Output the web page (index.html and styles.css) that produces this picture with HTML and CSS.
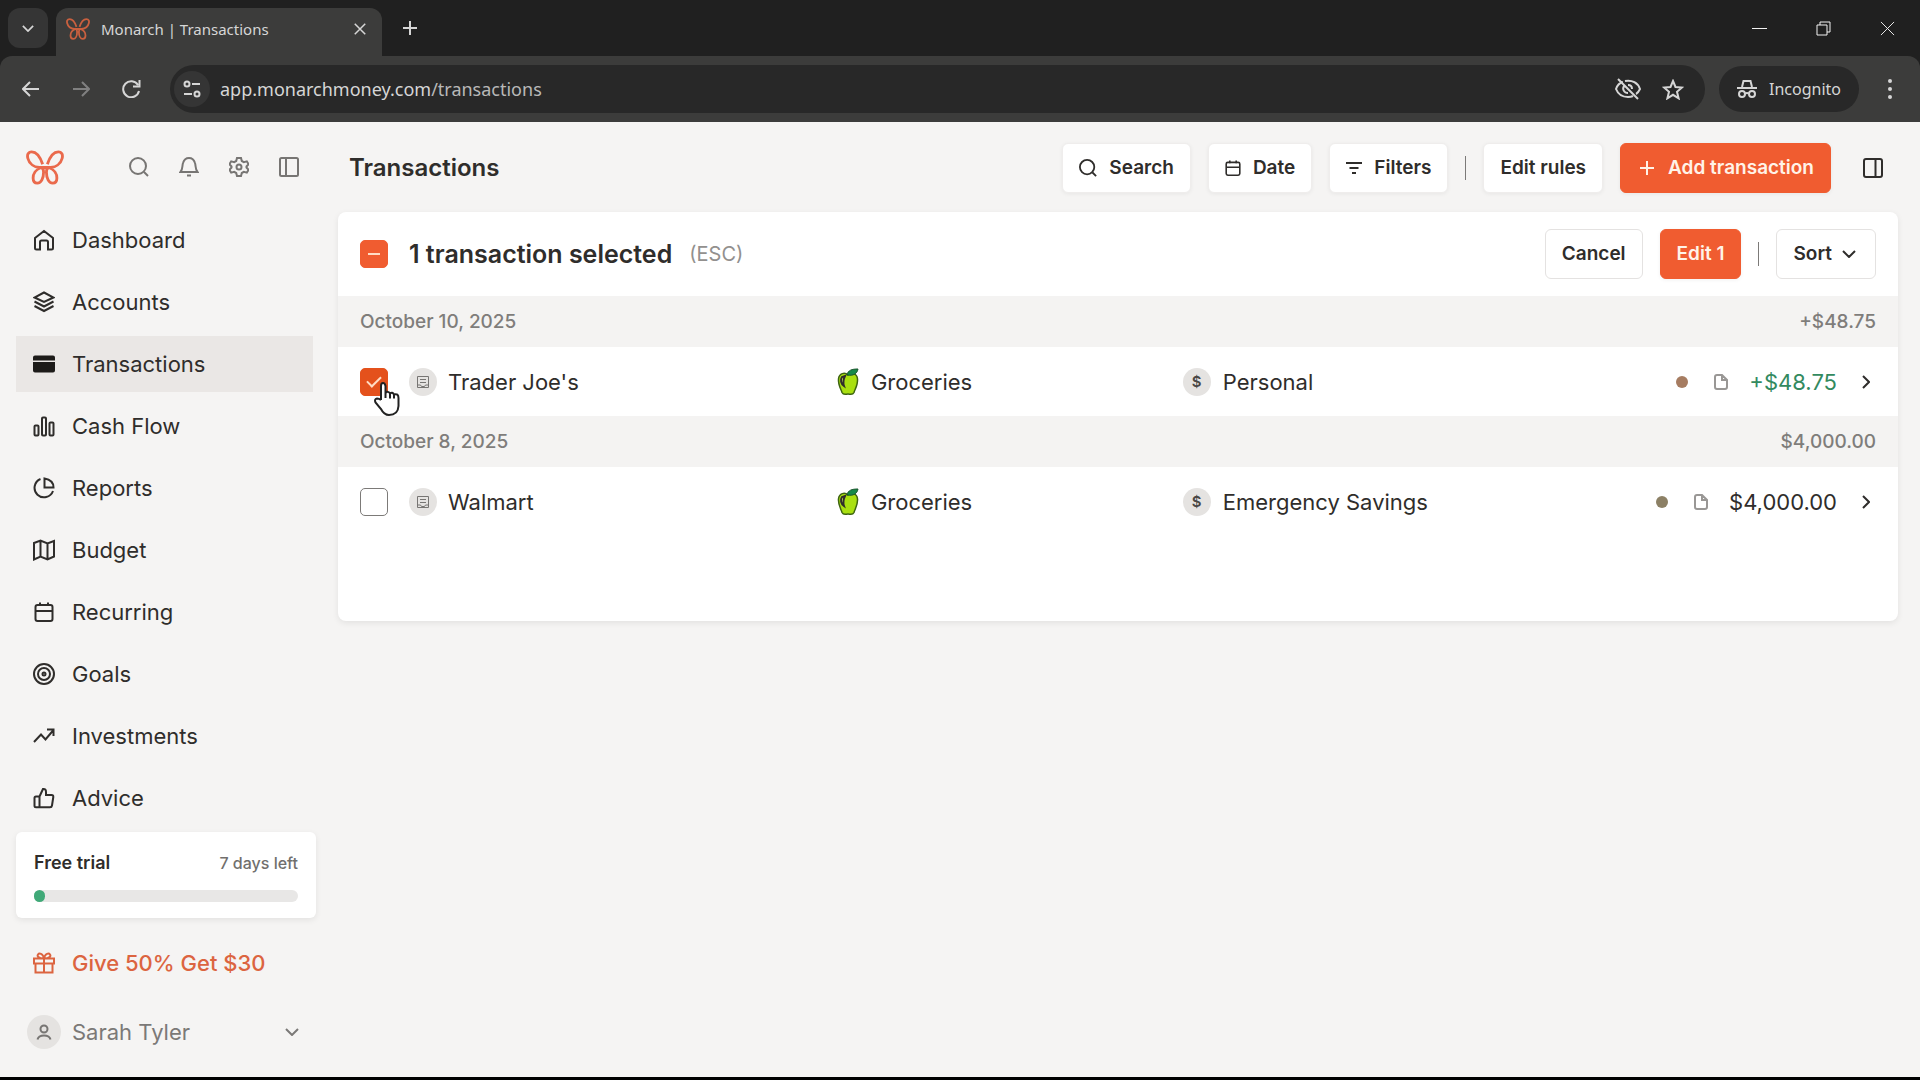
FILE: index.html
```html
<!DOCTYPE html>
<html lang="en">
<head>
<meta charset="utf-8">
<meta name="viewport" content="width=device-width, initial-scale=1">
<title>Monarch | Transactions</title>
<link rel="stylesheet" href="styles.css">
</head>
<body>
<svg class="defs" aria-hidden="true">
  <symbol id="butterfly" viewBox="0 0 40 36"><path d="M17.500 14.500C15 7 11 1.500 6 1.500C2 1.500 1 5 2 8.500C3.500 14.500 9 17.500 14 18H26C31 17.500 36.500 14.500 38 8.500C39 5 38 1.500 34 1.500C29 1.500 25 7 22.500 14.500M16 18C10 20 7.500 25 7.500 29C7.500 33 9.500 34.500 12 34.500C16 34.500 18.500 29 18.500 23C18.500 20 18 18.500 16 18M24 18C30 20 32.500 25 32.500 29C32.500 33 30.500 34.500 28 34.500C24 34.500 21.500 29 21.500 23C21.500 20 22 18.500 24 18"/></symbol>
  <symbol id="search" viewBox="0 0 20 20"><circle cx="9" cy="9" r="8"/><path d="M15 15l4 4"/></symbol>
  <symbol id="calendar" viewBox="0 0 20 20"><rect x="1.500" y="3" width="17" height="16" rx="2"/><path d="M1.500 9h17M6 .5V4M14 .5V4"/></symbol>
  <symbol id="store" viewBox="0 0 14 14"><path d="M1.500 1.500h11v11h-11zM4 4.500h6M4 7.500h6M1.500 10h3l1 1.500h3l1-1.500h3"/></symbol>
  <symbol id="apple" viewBox="0 0 26 28"><path d="M13 7C10 4 4 5 3.500 11C3 17 6 21 7 24.500C8.500 27.500 11 26 13 26C15 26 17.500 27.500 19 24.500C20 21 23 17 22.500 11C22 5 16 4 13 7Z" fill="#a9e010" stroke="#3d6410" stroke-width="1.500"/><path d="M7 9C5 12 6 16 9 18C8 15 8 12 10 8Z" fill="#dcf76c"/><path d="M12 7C13 2 17 1 23 1C22 6 18 8 13 7Z" fill="#168a49" stroke="#19552b" stroke-width="1"/></symbol>
  <symbol id="file" viewBox="0 0 14 16"><path d="M3 1h5l5 5v7q0 2-2 2H3q-2 0-2-2V3q0-2 2-2zM8 1v5h5"/></symbol>
  <symbol id="right" viewBox="0 0 8 14"><path d="M1 1l6 6-6 6"/></symbol>
  <symbol id="down" viewBox="0 0 14 8"><path d="M1 1l6 6 6-6"/></symbol>
  <symbol id="close" viewBox="0 0 16 16"><path d="M1 1l14 14M15 1L1 15"/></symbol>
</svg>

<header class="browser">
  <div class="tab-strip">
    <button class="tab-search" aria-label="Search tabs"><svg width="12" height="7"><use href="#down"/></svg></button>
    <div class="tab">
      <svg class="favicon" width="24" height="24"><use href="#butterfly"/></svg>
      <span class="tab-title">Monarch | Transactions</span>
      <button class="plain" aria-label="Close tab"><svg width="12" height="12"><use href="#close"/></svg></button>
    </div>
    <button class="plain new-tab" aria-label="New tab"><svg width="16" height="16" viewBox="0 0 16 16"><path d="M8 1v14M1 8h14"/></svg></button>
    <div class="window-controls">
      <button class="plain" aria-label="Minimize"><svg width="15" height="15" viewBox="0 0 15 15"><path d="M0 7.500h15"/></svg></button>
      <button class="plain" aria-label="Restore"><svg width="15" height="15" viewBox="0 0 15 15"><path d="M1 4h10v10H1zM4 4V1h10v10h-3"/></svg></button>
      <button class="plain" aria-label="Close window"><svg width="15" height="15"><use href="#close"/></svg></button>
    </div>
  </div>
  <div class="toolbar">
    <button class="plain" aria-label="Back"><svg width="18" height="16" viewBox="0 0 18 16"><path d="M8 1L1 8l7 7M1 8h16"/></svg></button>
    <button class="plain dim" aria-label="Forward"><svg width="18" height="16" viewBox="0 0 18 16"><path d="M10 1l7 7-7 7M17 8H1"/></svg></button>
    <button class="plain" aria-label="Reload"><svg width="19" height="18" viewBox="0 0 19 18"><path d="M16 5A8 8 0 1 0 17 11M17.500 0v6.500H11"/></svg></button>
    <div class="address">
      <button class="plain site-info" aria-label="Site information"><svg width="18" height="18" viewBox="0 0 18 18"><circle cx="4" cy="4" r="2.500"/><circle cx="14" cy="14" r="2.500"/><path d="M9 4h8M1 14h8"/></svg></button>
      <a class="url" href="#">app.monarchmoney.com<span>/transactions</span></a>
      <button class="plain" aria-label="Third-party cookies blocked"><svg width="26" height="22" viewBox="0 0 26 22"><path d="M8 4C4 5 2 8 1 11C3 16 7 19 13 19C15 19 17 18.500 18 18M10 3C17 1.500 23 5 25 11C24 13 23 15 21 16M9 8C7 11 9 15 13 15M13 7Q17 7 17 11M3 1l20 20"/></svg></button>
      <button class="plain" aria-label="Bookmark"><svg width="22" height="21" viewBox="0 0 22 21"><path d="M11 2l2.500 6 6.500.5-5 4.300 1.600 6.500L11 15.800 5.400 19.300 7 12.800 2 8.500 8.500 8z"/></svg></button>
    </div>
    <button class="incognito"><svg width="20" height="20" viewBox="0 0 20 20"><path d="M5 8L6.500 2h7L15 8"/><path d="M0 9h20"/><circle cx="5" cy="15" r="3"/><circle cx="15" cy="15" r="3"/><path d="M8 14.500q2-1 4 0"/></svg>Incognito</button>
    <button class="plain dots" aria-label="Menu"><svg width="4" height="20" viewBox="0 0 4 20"><circle cx="2" cy="2" r="2"/><circle cx="2" cy="10" r="2"/><circle cx="2" cy="18" r="2"/></svg></button>
  </div>
</header>

<div class="app">
  <aside class="sidebar">
    <div class="side-top">
      <a class="logo" href="#" aria-label="Monarch"><svg width="38" height="35"><use href="#butterfly"/></svg></a>
      <div class="side-tools">
        <button class="plain" aria-label="Search"><svg width="20" height="20"><use href="#search"/></svg></button>
        <button class="plain" aria-label="Notifications"><svg width="20" height="20" viewBox="0 0 20 20"><path d="M1.500 15C4 12 3 9 4 6Q5.500 1 10 1T16 6C17 9 16 12 18.500 15zM8 18.500h4"/></svg></button>
        <button class="plain" aria-label="Settings"><svg width="20" height="20" viewBox="0 0 20 20"><path d="M8 1h4l.8 3 2 1.100 3-.8 1.800 3L17.500 9.500v1l2.100 2.200-1.800 3-3-.8-2 1.100-.8 3H8l-.8-3-2-1.100-3 .8-1.800-3 2.100-2.200v-1L.4 7.300l1.800-3 3 .8 2-1.100z"/><circle cx="10" cy="10" r="2.500"/></svg></button>
        <button class="plain" aria-label="Toggle sidebar"><svg width="20" height="20" viewBox="0 0 20 20"><rect x="1" y="1" width="18" height="18" rx="1.500"/><path d="M7 1v18"/></svg></button>
      </div>
    </div>
    <nav class="nav">
      <a href="#"><svg width="22" height="22" viewBox="0 0 22 22"><path d="M2 9l9-7 9 7v10q0 1.500-1.500 1.500H15V13q0-1.500-1.500-1.500h-5Q7 11.500 7 13v7.500H3.500Q2 20.500 2 19z"/></svg>Dashboard</a>
      <a href="#"><svg width="22" height="22" viewBox="0 0 22 22"><path d="M11 1.500l9.500 5L11 11 1.500 6.500zM1.500 10.500L11 15.500l9.500-5M1.500 15L11 20l9.500-5"/></svg>Accounts</a>
      <a class="current" href="#" aria-current="page"><svg width="22" height="22" viewBox="0 0 22 22"><path class="solid" d="M2 2.500h18q2 0 2 2V7.500H0V4.500q0-2 2-2zM0 9h22v8.500q0 2-2 2H2q-2 0-2-2z"/></svg>Transactions</a>
      <a href="#"><svg width="22" height="22" viewBox="0 0 22 22"><rect x="1.500" y="10.500" width="4" height="10" rx="1"/><rect x="9" y="2.500" width="4" height="18" rx="1"/><rect x="16.500" y="7.500" width="4" height="13" rx="1"/></svg>Cash Flow</a>
      <a href="#"><svg width="22" height="22" viewBox="0 0 22 22"><path d="M7.500 2A9.500 9.500 0 1 0 20 14M11.500 1.500V10.500H20.500Q20.500 3 11.500 1.500z"/></svg>Reports</a>
      <a href="#"><svg width="22" height="22" viewBox="0 0 22 22"><path d="M1 4l6.500-2.500 7 3L21 2v15.500l-6.500 3-7-3L1 20.500zM7.500 1.500v16M14.500 4.500v16"/></svg>Budget</a>
      <a href="#"><svg width="20" height="20"><use href="#calendar"/></svg>Recurring</a>
      <a href="#"><svg width="22" height="22" viewBox="0 0 22 22"><circle cx="11" cy="11" r="10"/><circle cx="11" cy="11" r="6"/><circle cx="11" cy="11" r="1.500"/></svg>Goals</a>
      <a href="#"><svg width="22" height="22" viewBox="0 0 22 22"><path d="M1 17l7-7.500 4.500 5L20.500 5M14 4.500h6.500V11"/></svg>Investments</a>
      <a href="#"><svg width="22" height="22" viewBox="0 0 22 22"><path d="M6.500 9.500L10 2Q13 1.500 13 5V8h5.500q2 0 1.800 2L19 18.500q-.3 1.800-2 1.800H6.500zH3q-1.500 0-1.500 1.500v7.800q0 1.500 1.500 1.500h3.500"/></svg>Advice</a>
    </nav>
    <section class="trial">
      <div class="trial-head"><label for="trial">Free trial</label><span>7 days left</span></div>
      <progress id="trial" max="24" value="1"></progress>
    </section>
    <a class="referral" href="#"><svg width="22" height="22" viewBox="0 0 22 22"><path d="M1 6.500h20v5H1zM2.500 11.500h17v9h-17zM11 6.500v14M11 6.500C5 6.500 4 4 5 2.500S10 1 11 6.500C12 1 16 1 17 2.500S17 6.500 11 6.500"/></svg>Give 50% Get $30</a>
    <button class="profile">
      <span class="avatar"><svg width="16" height="16" viewBox="0 0 16 16"><circle cx="8" cy="5" r="3.500"/><path d="M1.500 15.500q1-4 6.500-4t6.500 4"/></svg></span>
      <span class="profile-name">Sarah Tyler</span>
      <svg width="14" height="8"><use href="#down"/></svg>
    </button>
  </aside>

  <main class="main">
    <div class="page-head">
      <h1>Transactions</h1>
      <button class="btn"><svg width="18" height="18"><use href="#search"/></svg>Search</button>
      <button class="btn"><svg width="16" height="16"><use href="#calendar"/></svg>Date</button>
      <button class="btn"><svg width="16" height="16" viewBox="0 0 16 16"><path d="M0 3h16M3.500 8h9M6 13h4"/></svg>Filters</button>
      <span class="divider"></span>
      <button class="btn">Edit rules</button>
      <button class="btn primary add"><svg width="14" height="14" viewBox="0 0 14 14"><path d="M7 0v14M0 7h14"/></svg>Add transaction</button>
      <button class="plain panel" aria-label="Toggle summary"><svg width="20" height="20" viewBox="0 0 20 20"><rect x="1" y="1" width="18" height="18" rx="2"/><path d="M12.500 1v18"/></svg></button>
    </div>
    <section class="card">
      <div class="select-bar">
        <input class="check mixed" id="all" type="checkbox" checked>
        <label for="all">1 transaction selected</label>
        <span class="hint">(ESC)</span>
        <button class="btn flat">Cancel</button>
        <button class="btn primary">Edit 1</button>
        <span class="divider"></span>
        <button class="btn flat sort">Sort <svg width="14" height="8"><use href="#down"/></svg></button>
      </div>
      <table class="list">
        <colgroup><col class="c-check"><col class="c-name"><col class="c-cat"><col></colgroup>
        <tbody>
          <tr class="date"><th colspan="3" scope="rowgroup">October 10, 2025</th><td>+$48.75</td></tr>
          <tr class="item">
            <td class="pick"><input class="check hover" type="checkbox" checked aria-label="Select Trader Joe's"><svg class="pointer" width="27" height="34" viewBox="0 0 27 34"><path d="M8 18V4Q8 1 10 1T12.500 4V11Q15 8.500 17 11.500Q19.500 9.500 21 12.500Q25.500 11 25.500 16V24Q25 33 16 33Q11 33 8 27L2.500 20.500Q1 17 4 16.500Q6 16.500 8 18M12.500 11v5M17 11.500v5M21 12.500v4"/></svg></td>
            <td><div class="cell"><span class="disc"><svg width="14" height="14"><use href="#store"/></svg></span>Trader Joe's</div></td>
            <td><div class="cell category"><svg width="26" height="28"><use href="#apple"/></svg>Groceries</div></td>
            <td><div class="cell"><span class="disc coin">$</span><span class="account">Personal</span><span class="dot"></span><svg class="file" width="14" height="16"><use href="#file"/></svg><span class="amount credit">+$48.75</span><svg class="go" width="8" height="14"><use href="#right"/></svg></div></td>
          </tr>
        </tbody>
        <tbody>
          <tr class="date"><th colspan="3" scope="rowgroup">October 8, 2025</th><td>$4,000.00</td></tr>
          <tr class="item">
            <td class="pick"><input class="check" type="checkbox" aria-label="Select Walmart"></td>
            <td><div class="cell"><span class="disc"><svg width="14" height="14"><use href="#store"/></svg></span>Walmart</div></td>
            <td><div class="cell category"><svg width="26" height="28"><use href="#apple"/></svg>Groceries</div></td>
            <td><div class="cell"><span class="disc coin">$</span><span class="account">Emergency Savings</span><span class="dot olive"></span><svg class="file" width="14" height="16"><use href="#file"/></svg><span class="amount">$4,000.00</span><svg class="go" width="8" height="14"><use href="#right"/></svg></div></td>
          </tr>
        </tbody>
      </table>
    </section>
  </main>
</div>
</body>
</html>
```
FILE: styles.css
```css
* { box-sizing: border-box; }

body {
  margin: 0;
  min-height: 100vh;
  display: flex;
  flex-direction: column;
  background: #f5f4f3;
  border-bottom: 3px solid #000;
  color: #2f2d2b;
  font: 400 22px/28px Inter, "Liberation Sans", sans-serif;
}

a { color: inherit; text-decoration: none; }
button { font: inherit; color: inherit; margin: 0; cursor: pointer; }
svg { flex: none; display: block; fill: none; stroke: currentColor; stroke-width: 2; }
.defs { position: absolute; width: 0; height: 0; }

.plain {
  display: flex;
  align-items: center;
  justify-content: center;
  padding: 0;
  border: 0;
  background: none;
}

/* Browser window */
.browser {
  background: #202020;
  color: #d6d6d6;
  font-family: "Noto Sans", "Open Sans", sans-serif;
}
.tab-strip { display: flex; height: 56px; padding-left: 8px; }
.tab-search {
  display: flex;
  align-items: center;
  justify-content: center;
  width: 40px;
  height: 40px;
  margin: 8px 8px 0 0;
  padding: 0;
  border: 0;
  border-radius: 12px;
  background: #353535;
}
.tab {
  display: flex;
  align-items: center;
  width: 326px;
  margin-top: 8px;
  padding: 0 16px 6px 10px;
  border-radius: 12px 12px 0 0;
  background: #3c3c3b;
}
.favicon { color: #c9603f; stroke-width: 3; }
.tab-title { flex: 1; padding-left: 11px; font-size: 15px; line-height: 24px; }
.new-tab { width: 56px; }
.window-controls { display: flex; margin-left: auto; margin-right: 1px; color: #f2f2f2; }
.window-controls .plain { width: 64px; }
.window-controls svg { stroke-width: 1; }
.toolbar {
  display: flex;
  align-items: center;
  height: 66px;
  padding: 0 16px 0 6px;
  border-radius: 12px 12px 0 0;
  background: #3c3c3b;
}
.toolbar > .plain { width: 50px; height: 48px; }
.toolbar > .dim { color: #808080; }
.address {
  display: flex;
  flex: 1;
  align-items: center;
  height: 48px;
  margin: 0 14px;
  padding: 0 20px 0 4px;
  border-radius: 24px;
  background: #282828;
}
.address > .plain { width: 46px; }
.address > .plain:last-child { width: 44px; margin-right: -10px; }
.address > .site-info {
  width: 36px;
  height: 36px;
  border-radius: 18px;
  background: #353535;
}
.url { flex: 1; padding-left: 10px; font-size: 18px; line-height: 24px; }
.url span { color: #b8b8b8; }
.incognito {
  display: flex;
  align-items: center;
  gap: 12px;
  height: 46px;
  padding: 0 18px;
  border: 0;
  border-radius: 23px;
  background: #282828;
  font-size: 16px;
  line-height: 24px;
}
.toolbar > .dots { width: 30px; margin-left: 16px; margin-right: -1px; }
.dots svg { fill: currentColor; stroke: none; }

/* Application shell */
.app { display: flex; flex: 1; }
.sidebar {
  display: flex;
  flex-direction: column;
  flex: none;
  width: 338px;
  padding: 22px 22px 16px 16px;
}
.side-top {
  display: flex;
  align-items: center;
  justify-content: space-between;
  height: 46px;
  margin-bottom: 22px;
  padding: 0 17px 0 10px;
}
.logo { color: #ea6a4c; }
.logo svg { stroke-width: 3; }
.side-tools { display: flex; gap: 30px; color: #777573; }

.nav { display: flex; flex-direction: column; gap: 6px; }
.nav a, .referral {
  display: flex;
  align-items: center;
  gap: 17px;
  height: 56px;
  padding-left: 17px;
}
.nav svg, .referral svg { width: 22px; }
.nav .current { background: #eae7e5; margin-right: 3px; }
.solid { fill: #1d1b19; stroke: none; }
.trial {
  height: 86px;
  margin: 6px 0 17px;
  padding: 18px;
  border-radius: 6px;
  background: #fff;
  box-shadow: 0 2px 6px rgba(0, 0, 0, .08);
}
.trial-head { display: flex; justify-content: space-between; line-height: 26px; font-size: 18px; font-weight: 600; }
.trial-head span { color: #716f6d; font-size: 16px; font-weight: 500; }
progress {
  display: block;
  appearance: none;
  width: 100%;
  height: 12px;
  margin-top: 14px;
  border: 0;
}
progress::-webkit-progress-bar { border-radius: 6px; background: #e8e7e6; }
progress::-webkit-progress-value { border-radius: 6px; background: #40a978; }
.referral { color: #dc6440; font-weight: 500; }
.profile {
  display: flex;
  align-items: center;
  height: 36px;
  margin-top: 23px;
  padding: 0 17px 0 11px;
  border: 0;
  background: none;
  color: #7b7977;
}
.avatar, .disc {
  display: flex;
  align-items: center;
  justify-content: center;
  flex: none;
  border-radius: 50%;
  background: #e5e3e1;
  color: #777573;
}
.avatar { width: 34px; height: 34px; }
.profile-name { flex: 1; padding-left: 11px; text-align: left; }

.main { flex: 1; padding: 22px 22px 40px 0; min-width: 0; }
.page-head { display: flex; align-items: center; height: 48px; margin-bottom: 20px; gap: 17px; }
h1 { flex: 1; margin: 0; padding-left: 11px; font-size: 24px; font-weight: 600; line-height: 32px; }
.btn {
  display: flex;
  align-items: center;
  justify-content: center;
  gap: 12px;
  height: 50px;
  padding: 0 16px;
  border: 1px solid #efedec;
  border-radius: 6px;
  background: #fff;
  box-shadow: 0 1px 4px rgba(0, 0, 0, .06);
  font-size: 19px;
  font-weight: 600;
  line-height: 24px;
  white-space: nowrap;
}
.btn.flat { border-color: #e4e2e1; box-shadow: none; }
.btn.primary { border-color: #f05c30; background: #f05c30; color: #fff3e8; }
.btn.add { padding: 0 16px 0 19px; gap: 14px; }
.btn.sort { gap: 10px; padding-right: 19px; }
.divider { width: 1px; height: 24px; background: #7c7a78; }
.panel { width: 48px; height: 46px; margin: 0 1px 0 1px; }

.card {
  min-height: 409px;
  border-radius: 8px;
  background: #fff;
  box-shadow: 0 2px 6px rgba(0, 0, 0, .08);
}
.select-bar {
  display: flex;
  align-items: center;
  gap: 17px;
  height: 84px;
  padding: 0 22px;
}
.select-bar label { padding-left: 4px; font-size: 25px; font-weight: 600; }
.hint { flex: 1; color: #92908e; font-size: 20px; }

.check {
  appearance: none;
  display: flex;
  align-items: center;
  justify-content: center;
  flex: none;
  width: 28px;
  height: 28px;
  margin: 0;
  border: 1px solid #7c7a78;
  border-radius: 5px;
  background: #fff;
}
.check:checked { border-color: #f05c30; background: #f05c30; }
.check.hover:checked { border-color: #e4511c; background: #e4511c; }
.check:checked::before {
  content: "";
  width: 12px;
  height: 6px;
  margin-top: -4px;
  border: solid #ffdcc4;
  border-width: 0 0 2px 2px;
  transform: rotate(-45deg);
}
.check.mixed::before { height: 0; margin: 0; border-width: 0 0 2px; transform: none; }

.list { width: 100%; border-collapse: collapse; table-layout: fixed; }
.c-check { width: 71px; }
.c-name { width: 27.3%; }
.c-cat { width: 22.3%; }
.list th, .list td { padding: 0; text-align: left; }
.date { height: 51px; background: #f4f3f2; color: #7f7d7b; font-size: 19px; }
.list .date th { padding-left: 22px; font-weight: 500; }
.list .date td { padding-right: 22px; text-align: right; font-weight: 500; }
.item { height: 69px; }
.list .pick { position: relative; padding-left: 22px; }
.pointer { position: absolute; left: 35px; top: 35px; z-index: 1; color: #222; fill: #fff; stroke-width: 2; }
.cell { display: flex; align-items: center; }
.disc { width: 28px; height: 28px; margin-right: 11px; }
.disc svg { stroke-width: 1; }
.coin { margin-right: 12px; font-size: 15px; font-weight: 600; color: #4a4846; }
.category { gap: 10px; }
.account { flex: 1; }
.dot { width: 12px; height: 12px; margin-right: 26px; border-radius: 50%; background: #a67c61; }
.olive { background: #8c8065; }
.file { margin-right: 21px; color: #999795; }
.credit { color: #338a5f; }
.go { margin: 0 28px 0 25px; }
```
